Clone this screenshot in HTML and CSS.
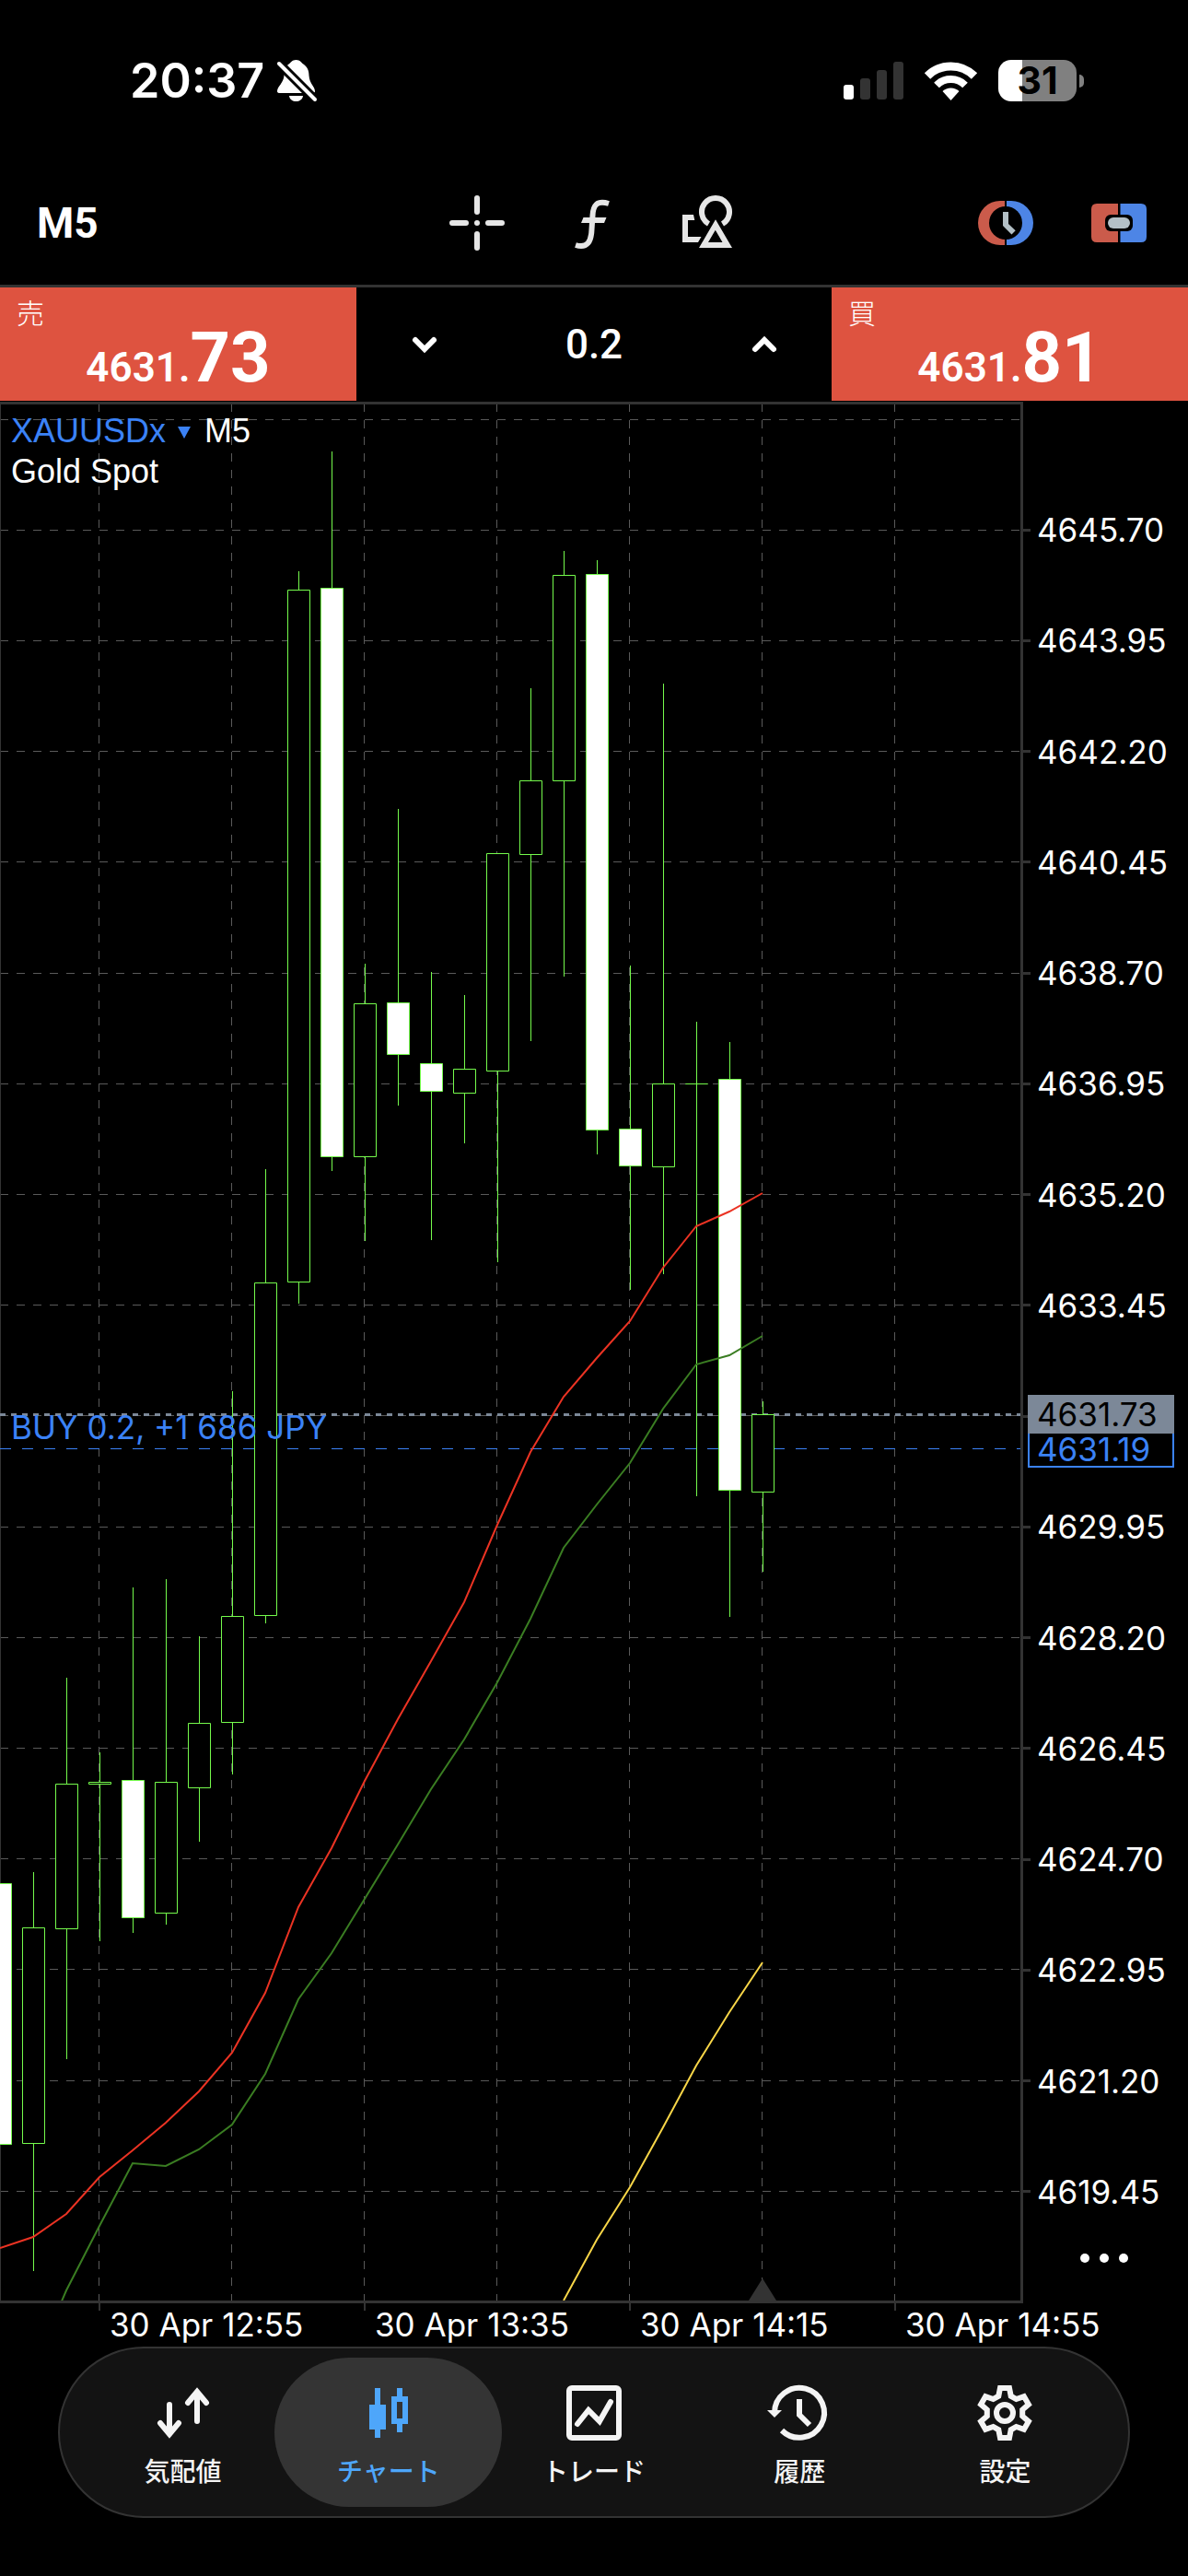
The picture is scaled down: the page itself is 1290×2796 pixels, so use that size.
FILE: index.html
```
<!DOCTYPE html>
<html lang="ja">
<head>
    <meta charset="UTF-8">
    <meta name="viewport" content="width=device-width, initial-scale=1">
    <title>XAUUSDx M5</title>
    <link rel="stylesheet" href="styles.css">
</head>
<body>
    <header class="status-bar">
        <div class="status-left">
            <span class="clock">20:37</span>
            <svg class="bell" viewBox="0 0 43 46">
                <path d="M20.500 0C16 0 15 3 12 5C8 8 7.500 12 7.500 17C7 25 0 29 0 34Q0 36 3 36H38Q41 36 41 34C41 29 35 26 34.500 17C34.500 12 33 8 29 5C26 3 25 0 20.500 0ZM13 39H28C27 47 14 47 13 39Z" fill="#fff"/>
                <path d="M2 4L41 43" stroke="#000" stroke-width="10"/>
                <path d="M2 4L41 43" stroke="#fff" stroke-width="4" stroke-linecap="round"/>
            </svg>
        </div>
        <div class="status-right">
            <svg class="signal" viewBox="0 0 65 41">
                <rect x="0" y="25" width="11" height="16" rx="3" fill="#fff"/>
                <rect x="18" y="18" width="11" height="23" rx="3" fill="#333"/>
                <rect x="36" y="9" width="11" height="32" rx="3" fill="#333"/>
                <rect x="54" y="0" width="11" height="41" rx="3" fill="#333"/>
            </svg>
            <svg class="wifi" viewBox="0 0 57 42" fill="none" stroke="#fff">
                <path d="M3 15.500A36 36 0 0 1 54 15.500" stroke-width="9"/>
                <path d="M13 25.500A22 22 0 0 1 44 25.500" stroke-width="8"/>
                <path d="M28.500 42L19.500 32A13 13 0 0 1 37.500 32Z" fill="#fff" stroke="none"/>
            </svg>
            <div class="battery"><span>31</span></div>
        </div>
    </header>

    <nav class="toolbar">
        <button class="timeframe">M5</button>
        <div class="tools">
            <button class="icon-btn" aria-label="Crosshair">
                <svg viewBox="0 0 60 60" stroke="#e6e6e6" stroke-width="6" stroke-linecap="round">
                    <path d="M3 30H18M42 30H57M30 3V18M30 42V57M30 30h.01"/>
                </svg>
            </button>
            <button class="icon-btn" aria-label="Indicators">
                <svg viewBox="0 0 60 60" fill="none">
                    <path d="M48 9C35 5 31 11 30.500 22L29.500 37C29 50 25 58 12 54" stroke="#e6e6e6" stroke-width="6"/>
                    <path d="M20.500 24H45.500L43 30H18Z" fill="#e6e6e6"/>
                </svg>
            </button>
            <button class="icon-btn" aria-label="Objects">
                <svg viewBox="0 0 60 60" fill="#e6e6e6">
                    <path d="M31.500 31A15 15 0 1 1 46.500 31" fill="none" stroke="#e6e6e6" stroke-width="6"/>
                    <path fill-rule="evenodd" d="M21 57H57L39 26.300ZM31 51H46.500L38.800 37.700Z"/>
                    <path d="M3 21H15L16.300 27H9V45H23.500L20 51H3Z"/>
                </svg>
            </button>
        </div>
        <div class="actions">
            <button class="icon-btn" aria-label="Pending order">
                <svg viewBox="0 0 60 60">
                    <path d="M29 6H24A24 24 0 0 0 24 54H29Z" fill="#cb5b4b"/>
                    <path d="M31 6H36A24 24 0 0 1 36 54H31Z" fill="#4d85e6"/>
                    <circle cx="30" cy="30" r="18" fill="#000"/>
                    <path d="M27 18H33V31L40.700 38.300L36.500 42.500L27 33Z" fill="#b4c0c6"/>
                </svg>
            </button>
            <button class="icon-btn" aria-label="One click trading">
                <svg viewBox="0 0 60 60">
                    <path d="M29 9H6Q0 9 0 15V45Q0 51 6 51H29Z" fill="#cb5b4b"/>
                    <path d="M31.500 9H54Q60 9 60 15V45Q60 51 54 51H31.500Z" fill="#4d85e6"/>
                    <rect x="15" y="21" width="30" height="18" rx="6" fill="#000"/>
                    <rect x="18" y="24" width="24" height="12" rx="6" fill="#b4c0c6"/>
                </svg>
            </button>
        </div>
    </nav>

    <section class="trade-panel">
        <button class="price-btn">
            <span class="side">売</span>
            <span class="price">4631.<b>73</b></span>
        </button>
        <div class="volume">
            <button class="step" aria-label="Decrease">
                <svg viewBox="0 0 28 20"><path d="M4 5L14 15L24 5"/></svg>
            </button>
            <input type="text" value="0.2" aria-label="Volume">
            <button class="step" aria-label="Increase">
                <svg viewBox="0 0 28 20"><path d="M4 15L14 5L24 15"/></svg>
            </button>
        </div>
        <button class="price-btn">
            <span class="side">買</span>
            <span class="price">4631.<b>81</b></span>
        </button>
    </section>

    <main class="chart">
        <div class="plot">
            <svg id="plot" viewBox="0 439 1108 2058"></svg>
            <div class="legend">
                <div><a href="#" class="symbol">XAUUSDx</a><i class="caret"></i>M5</div>
                <div>Gold Spot</div>
            </div>
        </div>
        <div class="axis">
            <ul class="prices">
                <li>4645.70</li>
                <li>4643.95</li>
                <li>4642.20</li>
                <li>4640.45</li>
                <li>4638.70</li>
                <li>4636.95</li>
                <li>4635.20</li>
                <li>4633.45</li>
                <li></li>
                <li>4629.95</li>
                <li>4628.20</li>
                <li>4626.45</li>
                <li>4624.70</li>
                <li>4622.95</li>
                <li>4621.20</li>
                <li>4619.45</li>
            </ul>
            <div class="tags">
                <div class="tag tag-bid">4631.73</div>
                <div class="tag tag-order">4631.19</div>
            </div>
            <button class="more" aria-label="More"><i></i><i></i><i></i></button>
        </div>
    </main>

    <div class="times">
        <span>30 Apr 12:55</span>
        <span>30 Apr 13:35</span>
        <span>30 Apr 14:15</span>
        <span>30 Apr 14:55</span>
    </div>

    <nav class="tab-bar">
        <button class="tab">
            <svg viewBox="0 0 60 60" class="line round">
                <path d="M15 21V53M5 41L15 53L25 41M45 39V7M35 19L45 7L55 19"/>
            </svg>
            <span>気配値</span>
        </button>
        <button class="tab active">
            <svg viewBox="0 0 60 60" fill="currentColor">
                <path d="M15 3H21V21H27V48H21V57H15V48H9V21H15Z"/>
                <path fill-rule="evenodd" d="M39 3H45V12H51V42H45V51H39V42H33V12H39ZM39 18V36H45V18Z"/>
            </svg>
            <span>チャート</span>
        </button>
        <button class="tab">
            <svg viewBox="0 0 60 60" class="line round">
                <rect x="3" y="3" width="54" height="54" rx="3"/>
                <path d="M12 42L24 27L36 39L48 18"/>
            </svg>
            <span>トレード</span>
        </button>
        <button class="tab">
            <svg viewBox="0 0 60 60" class="line">
                <path d="M3 30A27 27 0 1 1 11 49M30 15V32L41 43"/>
                <path d="M-5 27H11L3 35Z" fill="currentColor" stroke="none"/>
            </svg>
            <span>履歴</span>
        </button>
        <button class="tab">
            <svg viewBox="0 0 60 60" class="line">
                <path d="M25 3H35L36.700 11.700L42.500 15L50.900 12.200L55.900 20.800L49.200 26.600V33.400L55.900 39.200L50.900 47.800L42.500 45L36.700 48.300L35 57H25L23.300 48.300L17.500 45L9.100 47.800L4.100 39.200L10.800 33.400V26.600L4.100 20.800L9.100 12.200L17.500 15L23.300 11.700Z"/>
                <circle cx="30" cy="30" r="9"/>
            </svg>
            <span>設定</span>
        </button>
    </nav>

    <script src="chart.js"></script>
</body>
</html>
```
FILE: styles.css
```
* { box-sizing: border-box; }
body {
    margin: 0;
    min-height: 100vh;
    background: #000;
    color: #fff;
    font-family: Inter, "Noto Sans CJK JP", sans-serif;
    font-size: 35px;
}
button { padding: 0; margin: 0; border: 0; background: none; color: inherit; font: inherit; cursor: pointer; }
svg { display: block; overflow: visible; }

/* status bar */
.status-bar { display: flex; justify-content: space-between; align-items: center; height: 175px; padding: 0 121px 0 141px; }
.status-left { display: flex; align-items: center; gap: 14px; }
.clock { font-size: 52px; font-weight: 600; line-height: 60px; }
.bell { width: 43px; height: 46px; }
.status-right { display: flex; align-items: center; gap: 23px; margin-right: -16px; }
.signal { width: 65px; height: 41px; }
.wifi { width: 57px; height: 42px; }
.battery {
    position: relative;
    width: 85px;
    height: 45px;
    margin-right: 16px;
    border-radius: 14px;
    background: linear-gradient(to right, #fff 26px, #808080 26px);
    color: #000;
    font-size: 41px;
    font-weight: 700;
    line-height: 45px;
    text-align: center;
}
.battery::after { content: ""; position: absolute; left: 88px; top: 16px; width: 5px; height: 14px; border-radius: 0 5px 5px 0; background: #808080; }

/* toolbar */
.toolbar { display: grid; grid-template-columns: 1fr auto 1fr; align-items: center; height: 134px; padding: 0 45px 0 40px; }
.timeframe { justify-self: start; font-family: Roboto, sans-serif; font-size: 46px; font-weight: 700; }
.tools { display: flex; gap: 65px; }
.actions { display: flex; gap: 63px; justify-content: flex-end; }
.icon-btn svg { width: 60px; height: 60px; }

/* one click panel */
.trade-panel { display: grid; grid-template-columns: 3fr 4fr 3fr; grid-template-rows: 123px; height: 127px; border-top: 3px solid #333; font-family: Roboto, "Noto Sans CJK JP", sans-serif; }
.price-btn { display: flex; flex-direction: column; justify-content: flex-start; padding: 6px 18px 0; background: #de5340; text-align: left; }
.side { height: 32px; font-family: "Noto Sans CJK JP", sans-serif; font-size: 30px; font-weight: 300; line-height: 40px; }
.price { display: flex; justify-content: center; align-items: baseline; font-size: 44px; font-weight: 600; line-height: 50px; }
.price b { font-size: 76px; font-weight: 700; line-height: 76px; }
.volume { display: grid; grid-template-columns: 147px 1fr 147px; align-items: center; }
.volume input { width: 100%; padding: 0; border: 0; background: none; color: #fff; font: 500 44px Roboto, sans-serif; text-align: center; }
.step { display: grid; place-items: center; height: 100%; }
.step svg { width: 28px; height: 20px; fill: none; stroke: #fff; stroke-width: 6; stroke-linecap: round; }

/* chart */
.chart { display: grid; grid-template-columns: 1fr 182px; }
.plot { position: relative; border: solid #333; border-width: 3px 0; }
.plot svg { width: 100%; overflow: hidden; }
.legend { position: absolute; left: 12px; top: 7px; font: 36px/44px "Liberation Sans", Arial, sans-serif; }
.symbol { color: #3b82f6; text-decoration: none; }
.caret { display: inline-block; margin: 0 15px 4px 13px; border: solid transparent; border-width: 13px 7px 0; border-top-color: #3b82f6; }
.axis { position: relative; border-left: 3px solid #333; }
.prices { display: grid; grid-auto-rows: 1fr; height: 100%; margin: 0; padding: 79px 0 61px; list-style: none; }
.prices li { display: flex; align-items: center; gap: 7px; }
.prices li::before { content: ""; width: 8px; height: 3px; background: #333; }
.tags { position: absolute; left: 5px; right: 15px; top: 1078px; }
.tag { padding-left: 10px; }
.tag-bid { background: #7c8898; color: #000; line-height: 42px; }
.tag-order { border: 2px solid #3b82f6; border-top: 0; padding-left: 8px; color: #3b82f6; line-height: 35px; }
.more { position: absolute; right: 65px; bottom: 44px; display: flex; gap: 11px; }
.more i { width: 10px; height: 10px; border-radius: 50%; background: #fff; }

.grid { stroke: #5a5a5a; stroke-dasharray: 9 9; }
.candle { fill: #000; stroke: #75fb4c; }
.candle.down { fill: #fff; }
.ma { fill: none; stroke-width: 2; }
.bid-line { stroke: #7c8898; stroke-width: 3; stroke-dasharray: 6 6; }
.order-line { stroke: #3b82f6; stroke-dasharray: 12 12; }
.order-text { fill: #3b82f6; }

.times { display: grid; grid-template-columns: 107fr repeat(4, 288fr) 31fr; height: 47px; line-height: 47px; }
.times span { position: relative; padding-left: 12px; white-space: nowrap; }
.times span:first-child { grid-column: 2; }
.times span::before { content: ""; position: absolute; left: 0; top: 0; width: 2px; height: 8px; background: #333; }

/* tab bar */
.tab-bar { display: flex; height: 186px; margin: 0 63px 63px; padding: 10px 22px; border: 2px solid #333; border-radius: 93px; background: #131313; color: #f4f4f4; }
.tab { display: flex; flex: 1; flex-direction: column; align-items: center; gap: 14px; margin: 0 -12px; border-radius: 81px; font-size: 28px; font-weight: 500; line-height: 40px; padding-top: 30px; justify-content: flex-start; }
.tab.active { background: #343434; color: #4ea6fa; }
.tab svg { width: 60px; height: 60px; }
.line { fill: none; stroke: currentColor; stroke-width: 6; }
.round { stroke-linecap: round; }
```
FILE: chart.js
```
// high, low, body top, body bottom, 1 = down candle
const candles = [
    [2044, 2327, 2044, 2327, 1],
    [2032, 2465, 2092, 2326, 0],
    [1821, 2235, 1936, 2093, 0],
    [1902, 2107, 1934, 1936, 0],
    [1723, 2098, 1932, 2081, 1],
    [1714, 2089, 1934, 2076, 0],
    [1776, 1999, 1870, 1940, 0],
    [1510, 1926, 1754, 1869, 0],
    [1269, 1762, 1392, 1753, 0],
    [620, 1415, 640, 1391, 0],
    [490, 1271, 638, 1255, 1],
    [1046, 1347, 1089, 1255, 0],
    [878, 1200, 1088, 1144, 1],
    [1055, 1346, 1154, 1184, 1],
    [1080, 1241, 1160, 1186, 0],
    [926, 1370, 926, 1162, 0],
    [747, 1130, 847, 927, 0],
    [598, 1060, 624, 847, 0],
    [608, 1253, 623, 1226, 1],
    [1048, 1400, 1225, 1265, 1],
    [742, 1383, 1176, 1266, 0],
    [1109, 1624, 1176, 1176, 0],
    [1131, 1755, 1171, 1617, 1],
    [1521, 1706, 1535, 1619, 0]
];

const averages = [
    { color: '#eb3323', from: 0, y: [2440, 2428, 2403, 2363, 2334, 2304, 2270, 2228, 2163, 2070, 2006, 1933, 1866, 1803, 1739, 1655, 1576, 1516, 1474, 1434, 1376, 1331, 1315, 1295] },
    // starts below the visible range
    { color: '#3a7d22', from: 1, y: [2570, 2486, 2416, 2348, 2351, 2333, 2306, 2251, 2170, 2120, 2061, 2002, 1942, 1888, 1826, 1757, 1680, 1633, 1588, 1529, 1481, 1471, 1450] },
    { color: '#f8d648', from: 17, y: [2497, 2431, 2374, 2309, 2242, 2184, 2130] }
];

const right = 1108, top0 = 439, bottom = 2497;
let out = '';

for (let i = 0; i < 17; i++) {
    const y = Math.floor(455 + i * 120.2) + 0.5;
    out += `<path class="grid" d="M0 ${y}H${right}"/>`;
}
for (let x = 107.5; x < right; x += 144) {
    out += `<path class="grid" stroke-dashoffset="1" d="M${x} ${top0}V${bottom}"/>`;
}
out += `<path d="M0.5 ${top0}V${bottom}" stroke="#333"/>`;
out += '<path d="M813 2497L828 2473L843 2497Z" fill="#333"/>';
out += '<path class="bid-line" d="M0 1535.5H1108"/>';
out += '<path class="order-line" d="M0 1572.5H1108"/>';

candles.forEach(([high, low, a, b, down], i) => {
    const x = i * 36 + 0.5;
    const body = `M${x - 12} ${a + 0.5}H${x + 12}V${b + 0.5}H${x - 12}Z`;
    out += `<g class="candle${down ? ' down' : ''}"><path d="M${x} ${high}V${low}"/><path d="${body}"/></g>`;
});

averages.forEach(line => {
    const points = line.y.map((y, i) => `${(line.from + i) * 36},${y}`).join(' ');
    out += `<polyline class="ma" stroke="${line.color}" points="${points}"/>`;
});

out += '<text class="order-text" x="12" y="1562">BUY 0.2, +1 686 JPY</text>';
document.getElementById('plot').innerHTML = out;
```
